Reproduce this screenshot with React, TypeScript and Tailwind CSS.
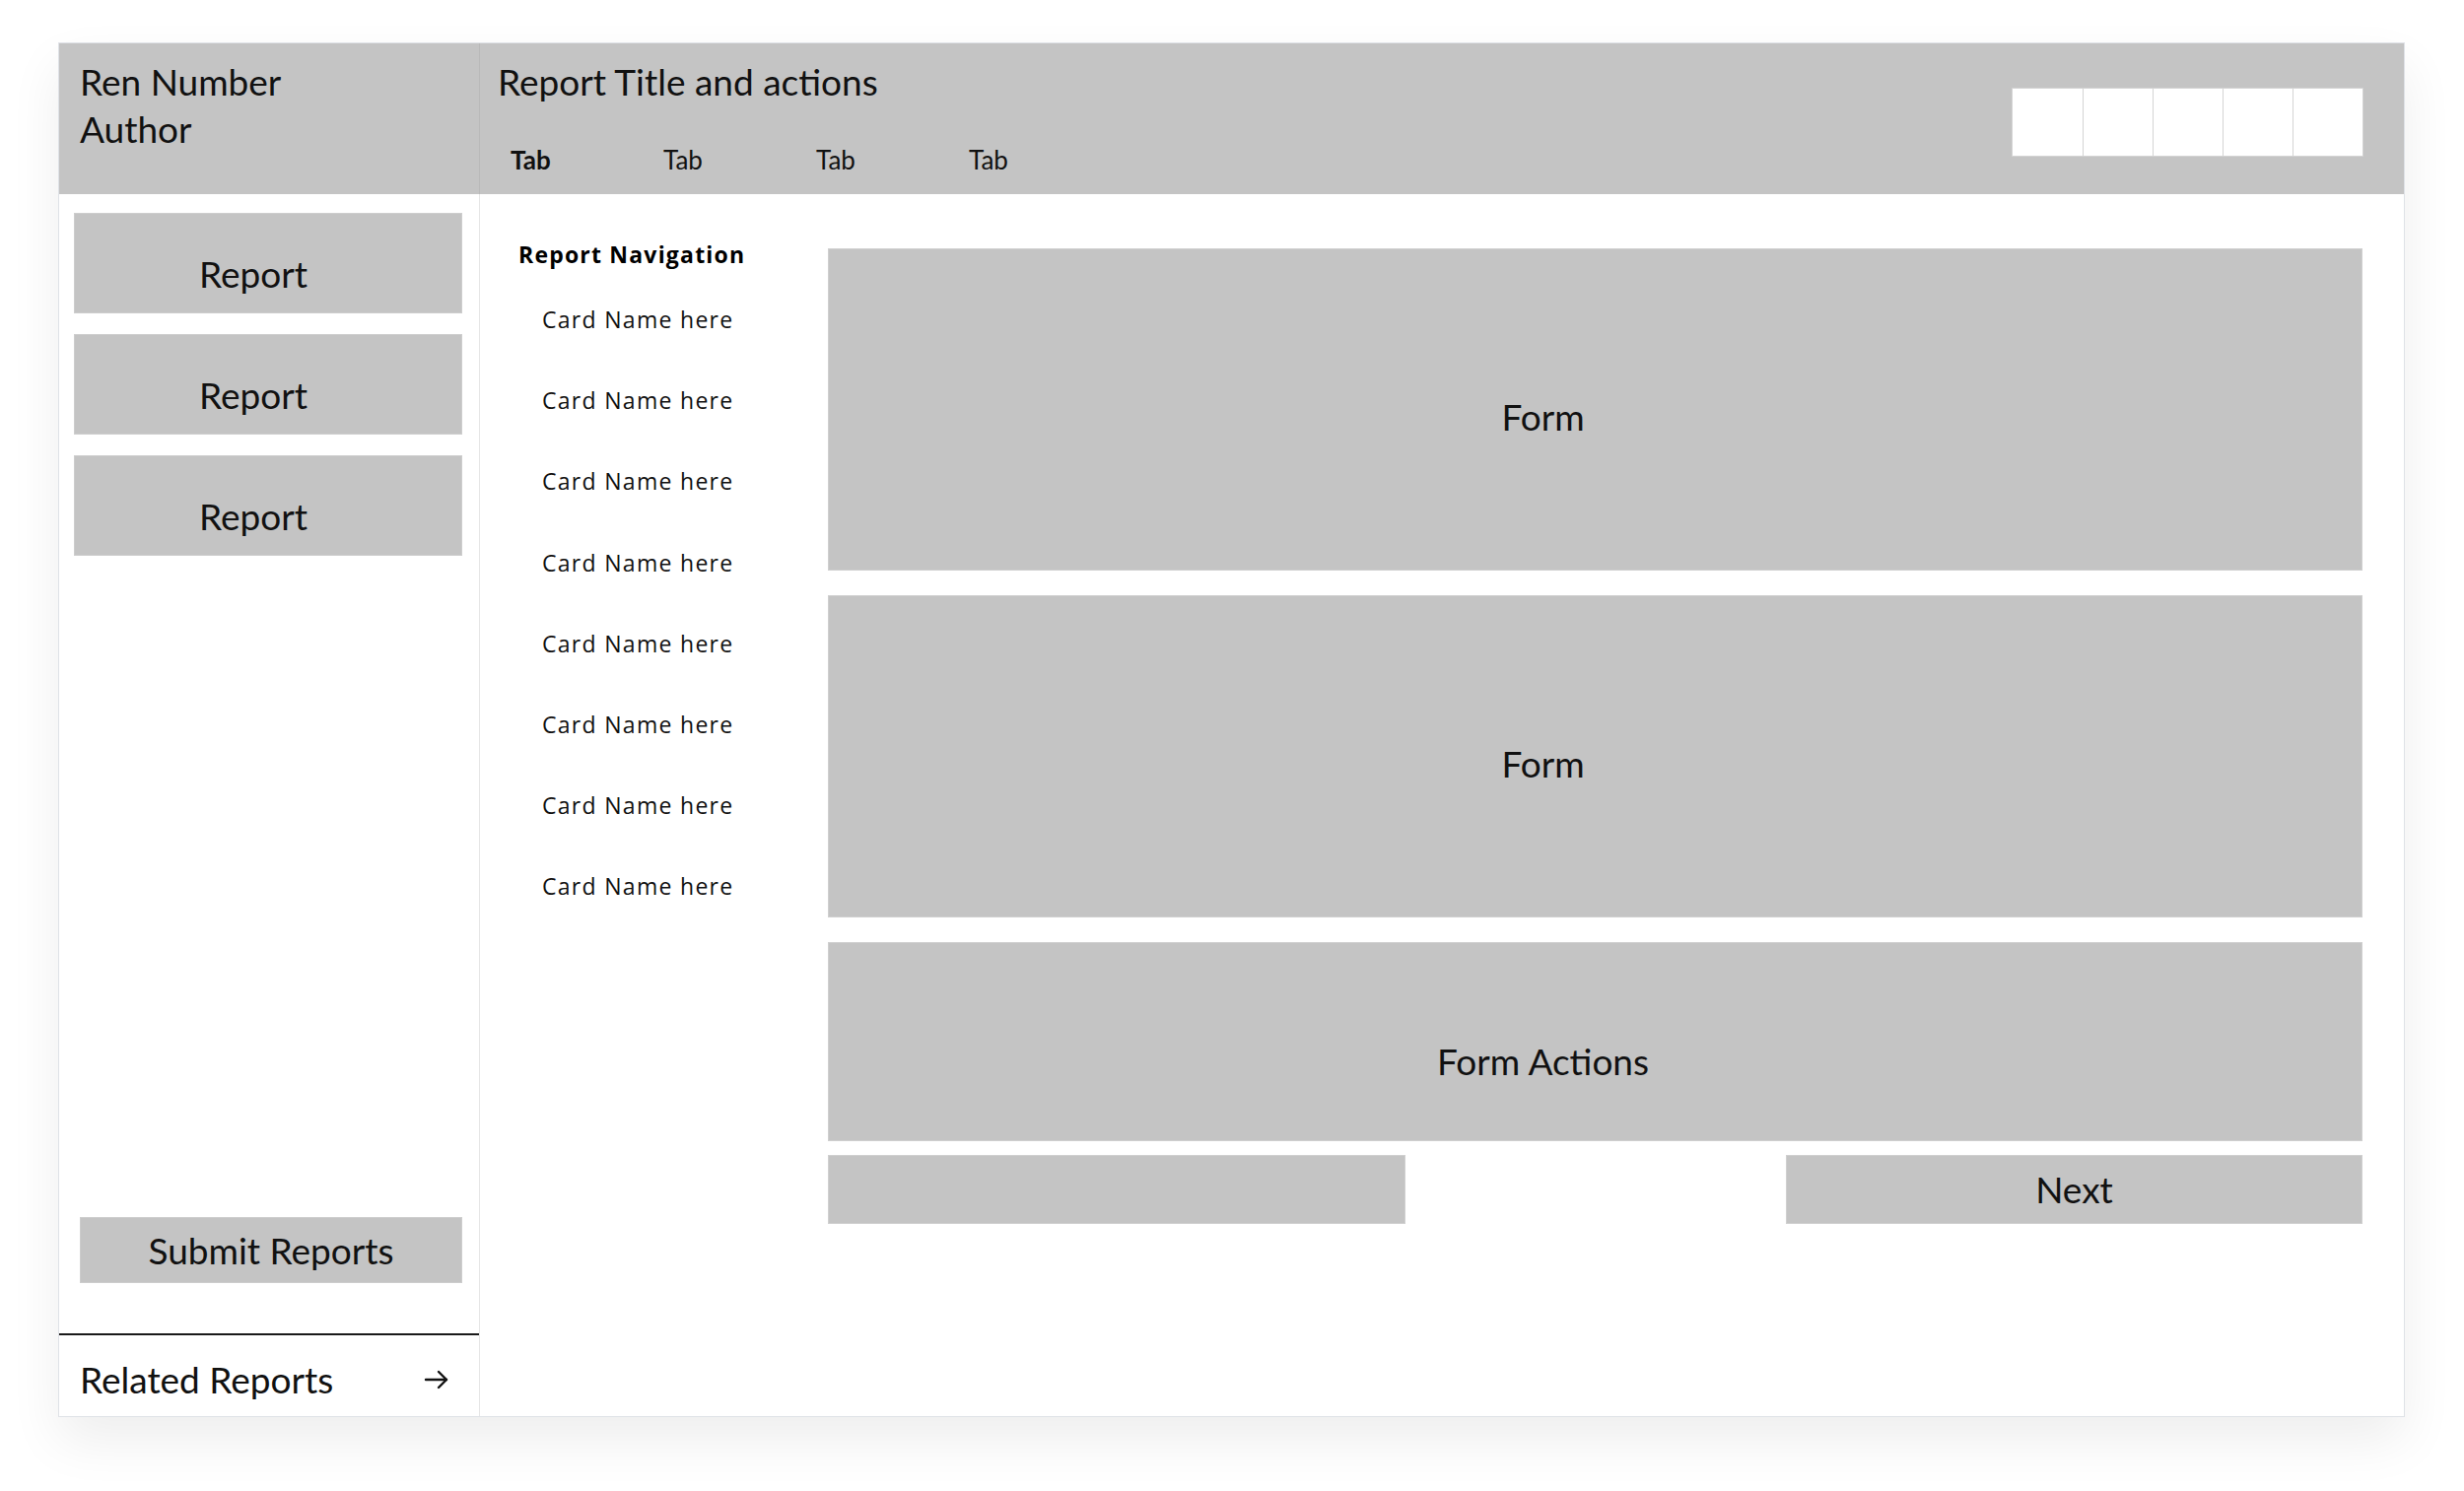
import * as React from "react";

const lato = { fontFamily: "Lato, 'Liberation Sans', sans-serif" };
const sans = { fontFamily: "'Open Sans', 'Noto Sans', sans-serif" };

function ArrowIcon() {
  return (
    <svg width="26" height="22" viewBox="0 0 26 22" fill="none" stroke="#111" strokeWidth="2.4" strokeLinecap="round" strokeLinejoin="round">
      <path d="M2 11h21" />
      <path d="M15 3l8 8-8 8" />
    </svg>
  );
}

function ReportButton() {
  return (
    <div className="h-[102px] bg-[#c4c4c4] border border-[#cdcdcd] flex items-center justify-center pr-[30px] pt-[22px] text-[37px] text-[#111]">
      Report
    </div>
  );
}

function FormBox({ label, className }: { label: string; className: string }) {
  return (
    <div className={"bg-[#c4c4c4] border border-[#cfcfcf] flex items-center justify-center text-[37px] text-[#111] " + className}>
      {label}
    </div>
  );
}

export default function App() {
  const cards = Array.from({ length: 8 }, (_, i) => i);
  const tabs = ["Tab", "Tab", "Tab", "Tab"];

  return (
    <div className="w-[2500px] h-[1513px] bg-white pt-[43px] pl-[59px]" style={lato}>
      <div className="w-[2381px] h-[1395px] flex flex-col border border-[#dfe2e7] bg-white shadow-[0_24px_50px_rgba(0,0,0,0.07)]">
        {/* header */}
        <div className="h-[153px] flex bg-[#c4c4c4] shrink-0">
          <div className="w-[427px] border-r border-[#b9b9b9] pt-[15px] px-[21px] text-[37px] leading-[48px] text-[#111]">
            <div>Ren Number</div>
            <div>Author</div>
          </div>
          <div className="flex-1 flex items-start justify-between pr-[41px]">
            <div className="pt-[15px] pl-[18px]">
              <div className="text-[37px] leading-[48px] text-[#111]">Report Title and actions</div>
              <div className="flex mt-[39px] pl-[13px] text-[26px] leading-[32px] text-[#111]">
                {tabs.map((t, i) => (
                  <div key={i} className={"w-[155px] " + (i === 0 ? "font-bold" : "")}>
                    {t}
                  </div>
                ))}
              </div>
            </div>
            <div className="mt-[45px] flex border border-[#d4d4d4]">
              {[0, 1, 2, 3, 4].map((i) => (
                <div key={i} className={"w-[71px] h-[68px] bg-white " + (i > 0 ? "border-l border-[#d4d4d4]" : "")} />
              ))}
            </div>
          </div>
        </div>

        {/* body */}
        <div className="flex-1 flex min-h-0">
          <div className="w-[427px] border-r border-[#e6e6e6] flex flex-col">
            <div className="pt-[19px] pl-[15px] pr-[17px] flex flex-col gap-[21px]">
              <ReportButton />
              <ReportButton />
              <ReportButton />
            </div>
            <div className="flex-1" />
            <div className="pl-[21px] pr-[17px]">
              <div className="h-[67px] bg-[#c4c4c4] border border-[#cdcdcd] flex items-center justify-center text-[37px] text-[#111]">
                Submit Reports
              </div>
            </div>
            <div className="mt-[51px] border-t-2 border-[#1a1a1a] h-[84px] flex items-center justify-between pl-[21px] pr-[30px] pt-[8px]">
              <span className="text-[37px] text-[#111]">Related Reports</span>
              <ArrowIcon />
            </div>
          </div>

          <div className="flex-1 flex">
            <div className="w-[353px] pt-[47px] pl-[39px]" style={sans}>
              <div className="text-[23px] leading-[28px] font-bold tracking-[1.2px] text-black">Report Navigation</div>
              <div className="mt-[38px] pl-[24px] flex flex-col gap-[54.2px]">
                {cards.map((i) => (
                  <div key={i} className="text-[23px] leading-[28px] tracking-[1.3px] text-[#111]">
                    Card Name here
                  </div>
                ))}
              </div>
            </div>
            <div className="flex-1 pt-[55px] pr-[42px] flex flex-col">
              <FormBox label="Form" className="h-[327px] pr-[106px] pt-[14px]" />
              <FormBox label="Form" className="h-[327px] mt-[25px] pr-[106px] pt-[14px]" />
              <FormBox label="Form Actions" className="h-[202px] mt-[25px] pr-[106px] pt-[40px]" />
              <div className="mt-[14px] flex justify-between">
                <div className="w-[586px] h-[70px] bg-[#c4c4c4] border border-[#d0d0d0]" />
                <div className="w-[585px] h-[70px] bg-[#c4c4c4] border border-[#d0d0d0] flex items-center justify-center text-[37px] text-[#111]">
                  Next
                </div>
              </div>
            </div>
          </div>
        </div>
      </div>
    </div>
  );
}
